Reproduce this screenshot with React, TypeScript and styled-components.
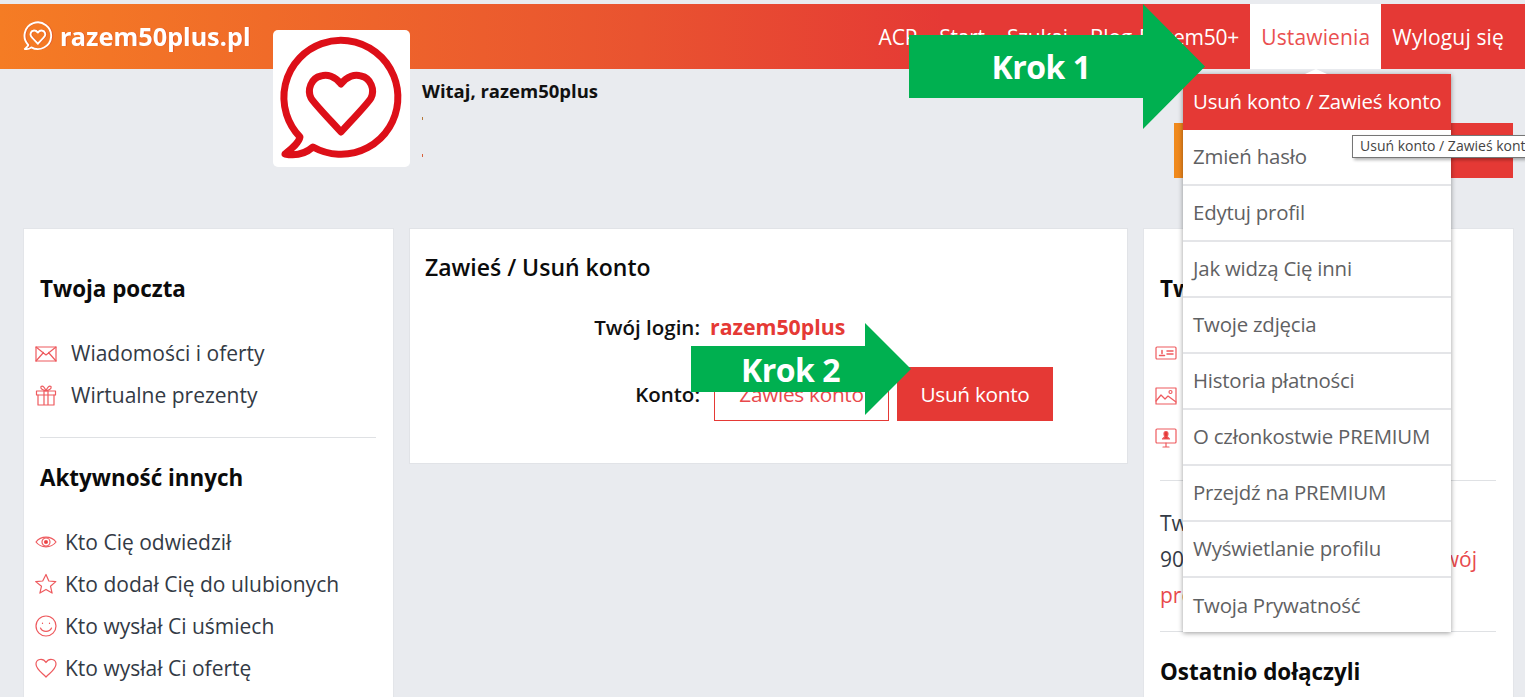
import React from "react";
import styled, { createGlobalStyle } from "styled-components";

const GlobalStyle = createGlobalStyle`
  html, body {
    margin: 0;
    padding: 0;
    background: #e9ebef;
    font-family: "Open Sans", "Noto Sans", sans-serif;
    overflow: hidden;
  }
  * { box-sizing: border-box; }
`;

const Page = styled.div`
  position: relative;
  width: 1525px;
  height: 697px;
  padding-top: 4px;
  overflow: hidden;
  background: #e9ebef;
`;

const Header = styled.header`
  display: flex;
  justify-content: space-between;
  align-items: stretch;
  height: 65px;
  padding: 0 10px 0 22px;
  background: linear-gradient(90deg, #f57c24 0%, #e95330 42%, #e53935 62%);
`;

const Brand = styled.div`
  display: flex;
  align-items: center;
  gap: 6px;
  padding-bottom: 1px;
  color: #fff;
  font-family: "Noto Sans", sans-serif;
  font-size: 25.3px;
  font-weight: 700;
  filter: drop-shadow(1px 0 0 rgba(200, 40, 40, 0.35));
`;

const Nav = styled.nav`
  display: flex;
  align-items: stretch;
`;

const NavItem = styled.a<{ $active?: boolean; $compact?: boolean; $trim?: number }>`
  display: flex;
  align-items: center;
  padding: 0 11px;
  margin-right: ${(p) => -(p.$trim ?? 0)}px;
  font-size: 21px;
  letter-spacing: ${(p) => (p.$compact ? "-0.2px" : "0.15px")};
  color: ${(p) => (p.$active ? "#ea4f50" : "#fff")};
  background: ${(p) => (p.$active ? "#fff" : "transparent")};
`;

const ProfileRow = styled.section`
  display: flex;
  align-items: flex-start;
  height: 159px;
  padding: 0 12px 0 273px;
`;

const Avatar = styled.div`
  position: relative;
  flex: none;
  width: 137px;
  height: 137px;
  margin-top: -39px;
  background: #fff;
  border-radius: 5px;
`;

const Welcome = styled.div`
  display: flex;
  flex-direction: column;
  align-items: flex-start;
  margin: 9px 0 0 12px;
  font-size: 18.5px;
  font-weight: 700;
  color: #111;
`;

const Speck = styled.span<{ $gap: number; $color: string }>`
  width: 1px;
  height: 3px;
  margin-top: ${(p) => p.$gap}px;
  background: ${(p) => p.$color};
`;

const PremiumBanner = styled.div`
  width: 339px;
  height: 55px;
  margin: 54px 0 0 auto;
  background: linear-gradient(90deg, #f08a1c 0%, #e53935 80%);
`;

const Columns = styled.main`
  display: grid;
  grid-template-columns: 371px 719px 371px;
  gap: 15px;
  align-items: start;
  padding-left: 23px;
`;

const Card = styled.div`
  height: 520px;
  padding: 43px 17px 40px 16px;
  background: #fff;
  border: 1px solid #e3e5e9;
  border-width: 1px 1px 0 1px;
`;

const SectionTitle = styled.h3<{ $first?: boolean }>`
  margin: ${(p) => (p.$first ? 0 : "23px")} 0 26px;
  font-size: 22.4px;
  line-height: 34px;
  font-weight: 700;
  color: #0b0b0b;
`;

const LinkList = styled.ul`
  margin: 0;
  padding: 0;
  list-style: none;
`;

const LinkRow = styled.li<{ $gap: number }>`
  display: flex;
  align-items: center;
  gap: ${(p) => p.$gap}px;
  height: 42px;
  margin-left: -5px;
  font-size: 21px;
  color: #333a45;
`;

const IconSlot = styled.svg`
  flex: none;
  width: 22px;
  height: 22px;
  fill: none;
  stroke: #ee5a5e;
  stroke-width: 1.2;
  stroke-linejoin: round;
  stroke-linecap: round;
`;

const Divider = styled.hr<{ $gap: number }>`
  height: 1px;
  margin: ${(p) => p.$gap}px 0 0;
  border: 0;
  background: #dfe1e4;
`;

const Paragraph = styled.div`
  margin-top: 24px;
  font-size: 21px;
  line-height: 36px;
  color: #333a45;
`;

const ParagraphLine = styled.div`
  display: flex;
  justify-content: space-between;
  white-space: nowrap;
`;

const TextLink = styled.span<{ $inset?: number }>`
  margin-right: ${(p) => p.$inset ?? 0}px;
  color: #e8494c;
`;

const AccountCard = styled.div`
  height: 236px;
  padding: 21px 15px 0;
  background: #fff;
  border: 1px solid #e1e3e7;
`;

const AccountTitle = styled.h2`
  margin: 0 0 28px;
  font-size: 23px;
  line-height: 34px;
  font-weight: 600;
  color: #0b0b0b;
`;

const FormGrid = styled.div`
  display: grid;
  grid-template-columns: 275px 1fr;
  column-gap: 10px;
  row-gap: 26px;
  align-items: center;
  font-size: 20.5px;
  font-weight: 600;
  color: #111;
`;

const FieldLabel = styled.div`
  text-align: right;
`;

const LoginValue = styled.div`
  font-size: 21.3px;
  font-weight: 700;
  color: #e53935;
`;

const ButtonRow = styled.div`
  display: flex;
  gap: 8px;
  margin-left: 4px;
`;

const ActionButton = styled.button<{ $solid?: boolean; $width: number }>`
  width: ${(p) => p.$width}px;
  height: 54px;
  padding: 0;
  font-family: inherit;
  font-size: 20.8px;
  letter-spacing: -0.3px;
  color: ${(p) => (p.$solid ? "#fff" : "#e8494c")};
  background: ${(p) => (p.$solid ? "#e53935" : "#fff")};
  border: 1px solid #e53935;
`;

const Dropdown = styled.ul`
  position: absolute;
  top: 74px;
  left: 1183px;
  z-index: 3;
  width: 268px;
  margin: 0;
  padding: 0;
  list-style: none;
  background: #fff;
  box-shadow: 0 1px 5px rgba(0, 0, 0, 0.4);

  &::before {
    content: "";
    position: absolute;
    top: -5px;
    left: 122px;
    border: solid transparent;
    border-width: 0 11px 5px;
    border-bottom-color: #fff;
  }
`;

const DropdownItem = styled.li<{ $active?: boolean }>`
  display: flex;
  align-items: center;
  height: 56px;
  padding: 0 0 ${(p) => (p.$active ? 3 : 2)}px 10px;
  font-size: 20.4px;
  letter-spacing: -0.2px;
  white-space: nowrap;
  font-weight: ${(p) => (p.$active ? 500 : 400)};
  color: ${(p) => (p.$active ? "#fff" : "#5f6163")};
  background: ${(p) => (p.$active ? "#e53935" : "#fff")};
  border-bottom: ${(p) => (p.$active ? "0" : "2px solid #e4e5e8")};

  &:last-child {
    height: 54px;
    padding-bottom: 0;
    border-bottom: 0;
  }
`;

const Tooltip = styled.div`
  position: absolute;
  top: 135px;
  left: 1352px;
  z-index: 4;
  height: 23px;
  padding: 0 7px;
  font-size: 14px;
  line-height: 20px;
  white-space: nowrap;
  color: #444;
  background: #fff;
  border: 1px solid #767676;
  box-shadow: 2px 2px 3px rgba(0, 0, 0, 0.3);
`;

const Arrow = styled.div<{
  $left: number;
  $top: number;
  $width: number;
  $height: number;
  $head: number;
  $inset: number;
  $labelShift: number;
}>`
  position: absolute;
  z-index: 5;
  left: ${(p) => p.$left}px;
  top: ${(p) => p.$top}px;
  width: ${(p) => p.$width}px;
  height: ${(p) => p.$height}px;
  display: flex;
  align-items: center;
  justify-content: center;
  padding-right: ${(p) => p.$labelShift}px;
  font-size: 32px;
  font-weight: 700;
  letter-spacing: -0.5px;
  color: #fff;
  background: #00b050;
  clip-path: polygon(
    0 ${(p) => p.$inset}px,
    ${(p) => p.$width - p.$head}px ${(p) => p.$inset}px,
    ${(p) => p.$width - p.$head}px 0,
    100% 50%,
    ${(p) => p.$width - p.$head}px 100%,
    ${(p) => p.$width - p.$head}px ${(p) => p.$height - p.$inset}px,
    0 ${(p) => p.$height - p.$inset}px
  );
`;

function BubbleHeart({ size, color, stroke }: { size: number; color: string; stroke: number }) {
  return (
    <svg width={size} height={size} viewBox="0 0 137 137" fill="none" stroke={color} strokeWidth={stroke} strokeLinejoin="round">
      <path d="M27 107A57 57 0 1 1 40 117C32 124 22 126 12 124C18 119 26 113 27 107Z" />
      <path d="M68 54C62 46 54 44 48 46C38 48 34 60 38 68C40 72 44 76 68 102C92 76 96 72 98 68C102 60 98 48 88 46C82 44 74 46 68 54Z" />
    </svg>
  );
}

const icons: Record<string, React.ReactNode> = {
  mail: (
    <>
      <rect x="1" y="5" width="20" height="14" />
      <path d="M1 5l10 8 10-8M1 19l7.5-8.5M21 19l-7.5-8.5" />
    </>
  ),
  gift: (
    <>
      <rect x="1.5" y="7" width="19" height="4" />
      <path d="M3 11v10h16V11M9 7v14M13 7v14M11 7C8 6 5 5 6 2.5 8 1 10 4 11 7c1-3 3-6 5-4.500 1 2.500-2 3.500-5 4.500" />
    </>
  ),
  eye: (
    <>
      <path d="M1 11c5-6.500 15-6.500 20 0-5 6.500-15 6.500-20 0Z" />
      <circle cx="11" cy="11" r="4" />
      <circle cx="11" cy="11" r="1.500" fill="#e53935" />
    </>
  ),
  star: <path d="M11 1.500l2.800 6.500 7 .6-5.300 4.600 1.600 6.900-6.100-3.700-6.100 3.700 1.600-6.900L.7 8.600l7-.6Z" />,
  smile: (
    <>
      <circle cx="11" cy="11" r="10" />
      <path d="M5.500 13c2 4.500 9 4.500 11 0M7.500 8v.5M14.500 8v.5" />
    </>
  ),
  heart: <path d="M11 20C6 15 1 12 1 7c0-5 7-6.500 10-1.500C14 .5 21 2 21 7c0 5-5 8-10 13Z" />,
  card: (
    <>
      <rect x="1" y="5" width="20" height="12" rx="1" />
      <path d="M4.500 13.500h5M7 8.500v3M12 9h6M12 12h6" strokeWidth="1.500" />
    </>
  ),
  photo: (
    <>
      <rect x="1" y="4" width="20" height="16" />
      <path d="M1 17l5-6 4 4 3-3 8 6" />
      <circle cx="15.500" cy="8" r="1.500" />
    </>
  ),
  screen: (
    <>
      <rect x="1" y="3" width="20" height="14" rx="1" />
      <path d="M8 21h6M11 17v4" />
      <path d="M11 5.500c1.500 0 2 1 2 2.500 0 1-.5 2-1 2.500l2.500 2.500h-7L10 10.500C9.500 10 9 9 9 8c0-1.500.5-2.500 2-2.500Z" fill="#e53935" />
    </>
  ),
};

function LinkIcon({ name }: { name: string }) {
  return <IconSlot viewBox="0 0 22 22">{icons[name]}</IconSlot>;
}

const navLinks = [
  { label: "ACP", trim: 0 },
  { label: "Start", trim: 0 },
  { label: "Szukaj", trim: 0 },
  { label: "Blog", trim: 15 },
  { label: "Razem50+", trim: 0 },
];
const mailLinks = [
  { icon: "mail", label: "Wiadomości i oferty" },
  { icon: "gift", label: "Wirtualne prezenty" },
];
const activityLinks = [
  { icon: "eye", label: "Kto Cię odwiedził" },
  { icon: "star", label: "Kto dodał Cię do ulubionych" },
  { icon: "smile", label: "Kto wysłał Ci uśmiech" },
  { icon: "heart", label: "Kto wysłał Ci ofertę" },
];
const profileLinks = [
  { icon: "card", label: "Dane" },
  { icon: "photo", label: "Zdjęcia" },
  { icon: "screen", label: "Profil" },
];
const settingsLinks = [
  "Zmień hasło",
  "Edytuj profil",
  "Jak widzą Cię inni",
  "Twoje zdjęcia",
  "Historia płatności",
  "O członkostwie PREMIUM",
  "Przejdź na PREMIUM",
  "Wyświetlanie profilu",
  "Twoja Prywatność",
];

function App() {
  return (
    <Page>
      <GlobalStyle />
      <Header>
        <Brand>
          <BubbleHeart size={32} color="#fff" stroke={8} />
          razem50plus.pl
        </Brand>
        <Nav>
          {navLinks.map((link) => (
            <NavItem key={link.label} $compact $trim={link.trim}>
              {link.label}
            </NavItem>
          ))}
          <NavItem $active>Ustawienia</NavItem>
          <NavItem>Wyloguj się</NavItem>
        </Nav>
      </Header>

      <ProfileRow>
        <Avatar>
          <BubbleHeart size={137} color="#dd0f18" stroke={7} />
        </Avatar>
        <Welcome>
          Witaj, razem50plus
          <Speck $gap={14} $color="#b5793c" />
          <Speck $gap={34} $color="#d8603a" />
        </Welcome>
        <PremiumBanner />
      </ProfileRow>

      <Columns>
        <Card>
          <SectionTitle $first>Twoja poczta</SectionTitle>
          <LinkList>
            {mailLinks.map((item) => (
              <LinkRow key={item.label} $gap={14}>
                <LinkIcon name={item.icon} />
                {item.label}
              </LinkRow>
            ))}
          </LinkList>
          <Divider $gap={21} />
          <SectionTitle>Aktywność innych</SectionTitle>
          <LinkList>
            {activityLinks.map((item) => (
              <LinkRow key={item.label} $gap={8}>
                <LinkIcon name={item.icon} />
                {item.label}
              </LinkRow>
            ))}
          </LinkList>
        </Card>

        <AccountCard>
          <AccountTitle>Zawieś / Usuń konto</AccountTitle>
          <FormGrid>
            <FieldLabel>Twój login:</FieldLabel>
            <LoginValue>razem50plus</LoginValue>
            <FieldLabel>Konto:</FieldLabel>
            <ButtonRow>
              <ActionButton $width={175}>Zawieś konto</ActionButton>
              <ActionButton $solid $width={156}>Usuń konto</ActionButton>
            </ButtonRow>
          </FormGrid>
        </AccountCard>

        <Card>
          <SectionTitle $first>Twój profil</SectionTitle>
          <LinkList>
            {profileLinks.map((item) => (
              <LinkRow key={item.label} $gap={8}>
                <LinkIcon name={item.icon} />
                {item.label}
              </LinkRow>
            ))}
          </LinkList>
          <Divider $gap={22} />
          <Paragraph>
            <ParagraphLine>Twoje konto</ParagraphLine>
            <ParagraphLine>
              <span>90 dni</span>
              <TextLink $inset={19}>Uzupełnij swój</TextLink>
            </ParagraphLine>
            <ParagraphLine>
              <TextLink>profil</TextLink>
            </ParagraphLine>
          </Paragraph>
          <Divider $gap={18} />
          <SectionTitle>Ostatnio dołączyli</SectionTitle>
        </Card>
      </Columns>

      <Dropdown>
        <DropdownItem $active>Usuń konto / Zawieś konto</DropdownItem>
        {settingsLinks.map((link) => (
          <DropdownItem key={link}>{link}</DropdownItem>
        ))}
      </Dropdown>
      <Tooltip>Usuń konto / Zawieś konto</Tooltip>

      <Arrow $left={909} $top={4} $width={296} $height={125} $head={62} $inset={31} $labelShift={32}>
        Krok 1
      </Arrow>
      <Arrow $left={691} $top={323} $width={220} $height={92} $head={46} $inset={23} $labelShift={21}>
        Krok 2
      </Arrow>
    </Page>
  );
}

export default App;
